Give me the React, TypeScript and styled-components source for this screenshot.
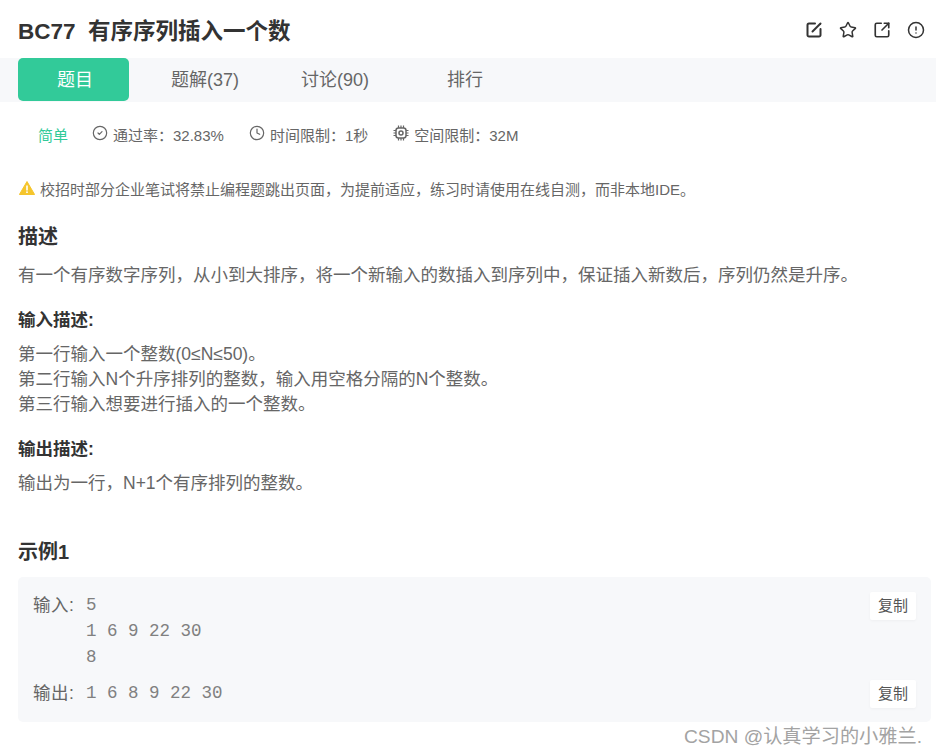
import React from 'react'
import { CircleAlert, CircleCheck, Clock, SquareArrowOutUpRight, Star } from 'lucide-react'
import styled, { createGlobalStyle } from 'styled-components'

const GlobalStyle = createGlobalStyle`
  html, body {
    margin: 0;
    padding: 0;
    background: #fff;
  }
  body {
    font-family: "Liberation Sans", "Noto Sans CJK SC", sans-serif;
    color: #333;
  }
`

const tabs = ['题目', '题解(37)', '讨论(90)', '排行']

const EditIcon = () => (
  <svg width="18" height="18" viewBox="0 0 18 18" fill="none" stroke="currentColor" strokeWidth="2" strokeLinecap="round">
    <path d="M10 2.500H4A1.500 1.500 0 0 0 2.500 4v10A1.500 1.500 0 0 0 4 15.500h10a1.500 1.500 0 0 0 1.500-1.500V8" />
    <path d="M7.500 10.500 15.500 2.500" />
  </svg>
)

const ChipIcon = () => (
  <svg width="16" height="16" viewBox="0 0 16 16" fill="none" stroke="currentColor" strokeWidth="1.500">
    <rect x="3" y="3" width="10" height="10" rx="2.500" />
    <circle cx="8" cy="8" r="2" />
    <path d="M5.500 0.500V3M8 0.500V3M10.500 0.500V3M5.500 13V15.500M8 13V15.500M10.500 13V15.500M0.500 5.500H3M0.500 8H3M0.500 10.500H3M13 5.500H15.500M13 8H15.500M13 10.500H15.500" strokeWidth="1.200" />
  </svg>
)

export default function App() {
  return (
    <>
      <GlobalStyle />
      <Page>
        <Header>
          <Title>BC77&nbsp;&nbsp;有序序列插入一个数</Title>
          <HeaderIcons>
            <EditIcon />
            <Star size={18} strokeWidth={2} />
            <SquareArrowOutUpRight size={18} strokeWidth={2.2} />
            <CircleAlert size={18} strokeWidth={2} />
          </HeaderIcons>
        </Header>
        <TabBar>
          {tabs.map((tab, i) => (
            <Tab key={tab} $active={i === 0}>
              {tab}
            </Tab>
          ))}
        </TabBar>
        <Meta>
          <Level>简单</Level>
          <MetaItem>
            <CircleCheck size={16} strokeWidth={1.8} />
            通过率：32.83%
          </MetaItem>
          <MetaItem>
            <Clock size={16} strokeWidth={1.8} />
            时间限制：1秒
          </MetaItem>
          <MetaItem>
            <ChipIcon />
            空间限制：32M
          </MetaItem>
        </Meta>
        <Warning>
          <svg width="16" height="14" viewBox="0 0 16 14">
            <path d="M8 0.500 15.600 13.500H0.400Z" fill="#f5c52c" stroke="#f5c52c" strokeLinejoin="round" />
            <rect x="7.200" y="4.500" width="1.600" height="5" fill="#fff" />
            <rect x="7.200" y="10.400" width="1.600" height="1.600" fill="#fff" />
          </svg>
          校招时部分企业笔试将禁止编程题跳出页面，为提前适应，练习时请使用在线自测，而非本地IDE。
        </Warning>
        <Heading>描述</Heading>
        <Lead>有一个有序数字序列，从小到大排序，将一个新输入的数插入到序列中，保证插入新数后，序列仍然是升序。</Lead>
        <SubHeading>输入描述:</SubHeading>
        <Body>
          第一行输入一个整数(0≤N≤50)。
          <br />
          第二行输入N个升序排列的整数，输入用空格分隔的N个整数。
          <br />
          第三行输入想要进行插入的一个整数。
        </Body>
        <SubHeading>输出描述:</SubHeading>
        <Body>输出为一行，N+1个有序排列的整数。</Body>
        <ExampleHeading>示例1</ExampleHeading>
        <ExampleCard>
          <ExampleRow>
            <ExampleLabel>输入:</ExampleLabel>
            <Code>{'5\n1 6 9 22 30\n8'}</Code>
            <CopyButton>复制</CopyButton>
          </ExampleRow>
          <ExampleRow>
            <ExampleLabel>输出:</ExampleLabel>
            <Code>1 6 8 9 22 30</Code>
            <CopyButton>复制</CopyButton>
          </ExampleRow>
        </ExampleCard>
        <Watermark>CSDN @认真学习的小雅兰.</Watermark>
      </Page>
    </>
  )
}

const Page = styled.div`
  position: relative;
  width: 936px;
  height: 756px;
  overflow: hidden;
`
const Header = styled.div`
  display: flex;
  align-items: center;
  justify-content: space-between;
  height: 58px;
  padding: 0 11px 0 18px;
  box-sizing: border-box;
`
const Title = styled.h1`
  margin: 0;
  font-size: 22.5px;
  font-weight: 700;
  color: #333;
`
const HeaderIcons = styled.div`
  display: flex;
  gap: 16px;
  margin-top: 1px;
  color: #333;
`
const TabBar = styled.div`
  display: flex;
  height: 44px;
  padding-left: 18px;
  background: #f7f8fa;
`
const Tab = styled.div<{ $active?: boolean }>`
  display: flex;
  align-items: center;
  justify-content: center;
  width: 111px;
  margin-right: 19px;
  height: 43px;
  padding: 0 0 4px 3px;
  box-sizing: border-box;
  border-radius: 5px;
  font-size: 18px;
  color: ${({ $active }) => ($active ? '#fff' : '#666')};
  background: ${({ $active }) => ($active ? '#32ca99' : 'transparent')};
`
const Meta = styled.div`
  display: flex;
  align-items: center;
  height: 20px;
  margin-top: 22px;
  padding-left: 38px;
  font-size: 15px;
  color: #666;
`
const Level = styled.span`
  color: #32ca99;
  margin-right: 24px;
`
const MetaItem = styled.span`
  display: flex;
  align-items: center;
  gap: 5px;
  margin-right: 25px;

  svg {
    margin-top: -3px;
  }
`
const Warning = styled.div`
  display: flex;
  align-items: center;
  gap: 5px;
  margin-top: 34px;
  padding-left: 19px;
  height: 20px;
  font-size: 15px;
  color: #666;
`
const Heading = styled.h2`
  margin: 25px 0 0 18px;
  font-size: 20px;
  line-height: 28px;
  font-weight: 700;
  color: #333;
`
const SubHeading = styled.h3`
  margin: 19px 0 0 18px;
  font-size: 17.5px;
  line-height: 26px;
  font-weight: 700;
  color: #333;
`
const Body = styled.p`
  margin: 9px 0 0 18px;
  font-size: 17.5px;
  line-height: 25px;
  color: #666;
`
const Lead = styled(Body)`
  margin-top: 12px;
`
const ExampleHeading = styled(Heading)`
  margin-top: 41.5px;
`
const ExampleCard = styled.div`
  display: flex;
  flex-direction: column;
  gap: 10px;
  margin: 11px 5px 0 18px;
  padding: 15px 15px 14px;
  border-radius: 5px;
  background: #f7f8fa;
`
const ExampleRow = styled.div`
  display: flex;
  align-items: flex-start;
`
const ExampleLabel = styled.span`
  width: 53px;
  font-size: 17.5px;
  line-height: 26px;
  letter-spacing: 0.5px;
  color: #666;
`
const Code = styled.pre`
  flex: 1;
  margin: 0;
  font-family: "Liberation Mono", monospace;
  font-size: 17.5px;
  line-height: 26px;
  color: #808080;
`
const CopyButton = styled.span`
  width: 46px;
  height: 28px;
  line-height: 28px;
  text-align: center;
  border-radius: 2px;
  background: #fff;
  font-size: 15px;
  color: #555;
  box-shadow: 0 1px 3px rgba(0, 0, 0, 0.04);
`
const Watermark = styled.div`
  position: absolute;
  right: 14px;
  bottom: 7px;
  font-size: 19.2px;
  color: #a3a3a3;
  white-space: nowrap;
`
